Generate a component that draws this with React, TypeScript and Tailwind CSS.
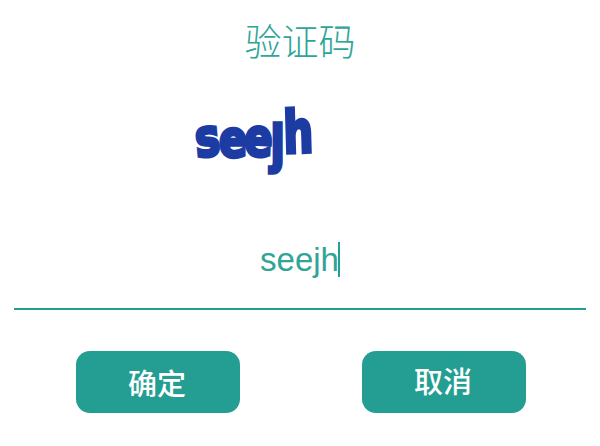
export default function App() {
  const font = { fontFamily: '"Noto Sans CJK SC", "Liberation Sans", sans-serif' };
  return (
    <div className="w-[600px] h-[446px] bg-white flex flex-col font-['Liberation_Sans','Noto_Sans_CJK_SC',sans-serif]">
      <div className="h-[80px] flex items-center justify-center text-[37px] leading-none font-light text-[#2fa597]" style={font}>
        验证码
      </div>
      <div className="h-[120px] pl-[195px] pt-[15px]">
        <div className="w-[180px] h-[80px] origin-left scale-x-[0.8] whitespace-nowrap text-[52px] leading-[80px] font-bold text-[#1c3ba3] [-webkit-text-stroke:3.5px_#1c3ba3] font-['DejaVu_Sans',sans-serif]">
          <span className="inline-block -rotate-6 translate-y-[3px]">s</span>
          <span className="inline-block translate-y-[4px] -ml-[1px]">e</span>
          <span className="inline-block rotate-3 translate-y-[3px] -ml-[3px]">e</span>
          <span className="inline-block translate-y-[9px] -ml-[3px]">j</span>
          <span className="inline-block origin-bottom scale-y-[1.12] translate-y-[2px] -rotate-2">h</span>
        </div>
      </div>
      <div className="mx-[14px] h-[110px] border-b-2 border-[#229e92] flex justify-center pt-[42px]">
        <div className="flex items-start h-[36px] text-[33px] leading-[36px] text-[#2fa597] font-['Liberation_Sans',sans-serif]">
          <span>seejh</span>
          <span className="w-[2px] h-[35px] -ml-[1px] bg-[#229e92]" />
        </div>
      </div>
      <div className="mt-[41px] pl-[76px] flex gap-[122px]">
        <button className="w-[164px] h-[62px] pr-[2px] rounded-[14px] bg-[#249e92] text-white text-[29px] leading-none font-medium" style={font}>
          确定
        </button>
        <button className="w-[164px] h-[62px] pr-[2px] pb-[3px] rounded-[14px] bg-[#249e92] text-white text-[29px] leading-none font-medium" style={font}>
          取消
        </button>
      </div>
    </div>
  );
}
